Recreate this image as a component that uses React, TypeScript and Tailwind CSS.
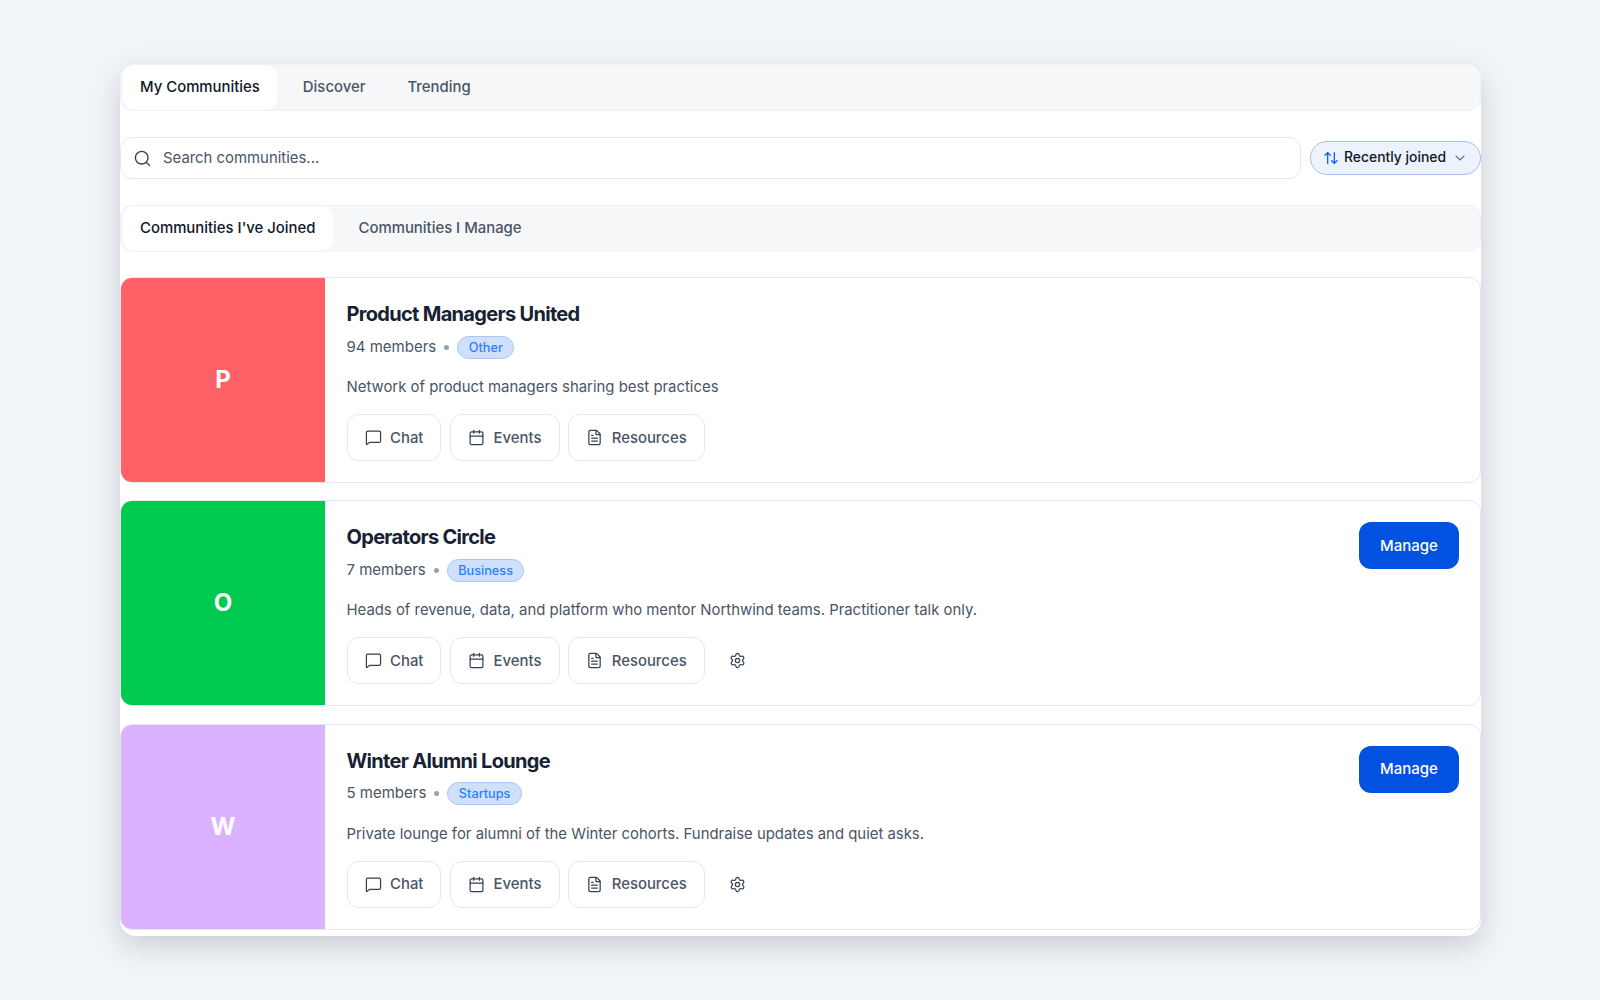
import React from 'react';
import { ArrowUpDown, Calendar, ChevronDown, FileText, MessageSquare, Search, Settings } from 'lucide-react';

interface Community {
  letter: string;
  name: string;
  members: string;
  tag: string;
  description: string;
  color: string;
  canManage: boolean;
}

const communities: Community[] = [
  {
    letter: 'P',
    name: 'Product Managers United',
    members: '94 members',
    tag: 'Other',
    description: 'Network of product managers sharing best practices',
    color: 'bg-[#ff6166]',
    canManage: false,
  },
  {
    letter: 'O',
    name: 'Operators Circle',
    members: '7 members',
    tag: 'Business',
    description: 'Heads of revenue, data, and platform who mentor Northwind teams. Practitioner talk only.',
    color: 'bg-[#00c950]',
    canManage: true,
  },
  {
    letter: 'W',
    name: 'Winter Alumni Lounge',
    members: '5 members',
    tag: 'Startups',
    description: 'Private lounge for alumni of the Winter cohorts. Fundraise updates and quiet asks.',
    color: 'bg-[#dab2ff]',
    canManage: true,
  },
];

const actions = [
  { label: 'Chat', Icon: MessageSquare },
  { label: 'Events', Icon: Calendar },
  { label: 'Resources', Icon: FileText },
];

const CommunityCard = ({ community }: { community: Community }) => (
  <div className="flex h-[206px] overflow-hidden rounded-xl border border-[#e5e7eb] bg-white">
    <div className={`flex w-[204px] shrink-0 items-center justify-center text-[24px] font-bold text-white ${community.color}`}>
      {community.letter}
    </div>
    <div className="flex flex-1 justify-between pl-[21.5px] pr-[21px] pt-[21px]">
      <div>
        <h3 className="text-[20px] font-[650] leading-[30px] tracking-[-0.69px] text-[#172133]">{community.name}</h3>
        <div className="mt-[6px] flex h-[24px] items-center text-[15px] text-[#4a5565]">
          <span>{community.members}</span>
          <span className="mx-[8px] h-[5px] w-[5px] rounded-full bg-[#99a1af]" />
          <span className="rounded-full border border-[#a9c6f5] bg-[#cfe0fc] px-[10.5px] py-[2px] text-[12.7px] font-medium leading-[17px] text-[#2b7fff]">
            {community.tag}
          </span>
        </div>
        <p className="mt-[16px] text-[14.9px] leading-[24px] text-[#4a5565]">{community.description}</p>
        <div className="mt-[15px] flex items-center gap-[8.7px]">
          {actions.map(({ label, Icon }) => (
            <button
              key={label}
              className="flex h-[47px] items-center gap-[8.5px] rounded-xl border border-[#e5e7eb] bg-white px-[17px] text-[14.9px] font-medium text-[#4a5565]"
            >
              <Icon className="h-[17px] w-[17px] text-[#364153]" strokeWidth={1.75} />
              {label}
            </button>
          ))}
          {community.canManage && (
            <div className="ml-[15.5px] flex items-center">
              <Settings className="h-[17px] w-[17px] text-[#364153]" strokeWidth={1.75} />
            </div>
          )}
        </div>
      </div>
      {community.canManage && (
        <button className="h-[47px] w-[100px] rounded-xl bg-[#0251e0] text-[15px] font-medium text-white">Manage</button>
      )}
    </div>
  </div>
);

const TabStrip = ({ tabs }: { tabs: string[] }) => (
  <div className="flex h-[47px] items-stretch gap-[8px] rounded-xl border border-[#f0f1f3] bg-[#f6f7f9]">
    {tabs.map((tab, i) => (
      <div
        key={tab}
        className={
          i === 0
            ? 'ml-[2px] mr-[1px] flex items-center rounded-xl bg-white px-[17px] text-[14.9px] font-medium text-[#101828]'
            : 'flex items-center px-[17px] text-[14.9px] font-medium text-[#4a5565]'
        }
      >
        {tab}
      </div>
    ))}
  </div>
);

export default function App() {
  return (
    <div className="min-h-screen bg-[#f1f4f9] pl-[120px] pt-[64px] font-['Inter',sans-serif]">
      <div className="h-[872px] w-[1361px] overflow-hidden rounded-2xl bg-white shadow-[0_10px_30px_rgba(0,0,0,0.16)]">
        <TabStrip tabs={['My Communities', 'Discover', 'Trending']} />

        <div className="mt-[26px] flex items-center gap-[9px]">
          <div className="flex h-[42px] flex-1 items-center gap-[11px] rounded-xl border border-[#e5e7eb] bg-white px-[12px] text-[14.9px] text-[#4a5565]">
            <Search className="h-[19px] w-[19px] text-[#364153]" strokeWidth={1.75} />
            Search communities...
          </div>
          <button className="flex h-[34px] w-[171px] items-center gap-[5px] rounded-full border border-[#a3bff0] bg-[#edf3fd] pb-[1px] pl-[12px] text-[13.9px] font-medium text-[#101828]">
            <ArrowUpDown className="h-[16px] w-[16px] text-[#155dfc]" />
            Recently joined
            <ChevronDown className="ml-[1px] h-[16px] w-[16px] text-[#6a7282]" strokeWidth={1.75} />
          </button>
        </div>

        <div className="mt-[26px]">
          <TabStrip tabs={["Communities I've Joined", 'Communities I Manage']} />
        </div>

        <div className="mt-[25.45px] flex flex-col gap-[17.04px]">
          {communities.map(c => (
            <CommunityCard key={c.letter} community={c} />
          ))}
        </div>
      </div>
    </div>
  );
}
